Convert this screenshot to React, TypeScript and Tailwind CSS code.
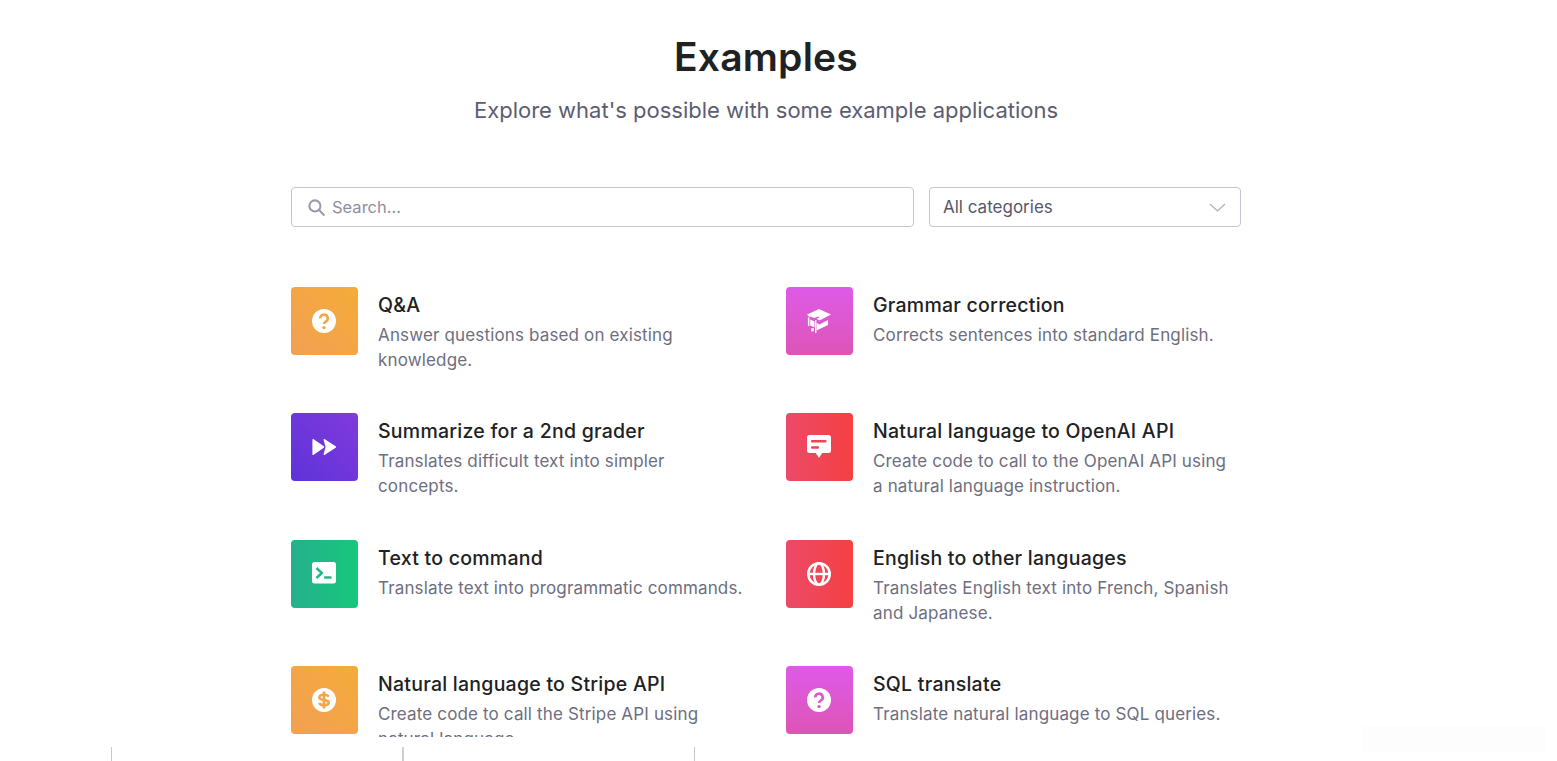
const font = "font-['Inter','Liberation_Sans',sans-serif]";

const orange = "bg-gradient-to-tr from-[#f2a052] to-[#f5ab38]";
const purple = "bg-gradient-to-tr from-[#5d33d9] to-[#8139dc]";
const pink = "bg-gradient-to-b from-[#de5ae8] to-[#dd54b5]";
const red = "bg-gradient-to-r from-[#ec4a68] to-[#f44040]";
const green = "bg-gradient-to-r from-[#25b08c] to-[#16c77c]";

function Question({ c }: { c: string }) {
  return (
    <svg width="24" height="24" viewBox="0 0 24 24">
      <circle cx="12" cy="12" r="12" fill="#fff" />
      <path d="M8.3 9.4a3.7 3.7 0 1 1 5.6 3.1c-1.2.8-1.9 1.2-1.9 2.6" fill="none" stroke={c} strokeWidth="2.6" />
      <circle cx="12" cy="18.6" r="1.7" fill={c} />
    </svg>
  );
}

function Forward() {
  return (
    <svg width="24" height="24" viewBox="0 0 24 24" fill="#fff" stroke="#fff" strokeWidth="1.6" strokeLinejoin="round">
      <path d="M1.2 4.8 11.4 12 1.2 19.2Z" />
      <path d="M12.4 4.8 23.2 12 12.4 19.2 14.4 12Z" />
    </svg>
  );
}

function Cap() {
  return (
    <svg width="24" height="24" viewBox="0 0 24 24" fill="#fff">
      <path d="M0 5.5 12 0 24 5.5 12.5 11.5 9.5 9.8 12.5 8.4 11.2 7.4 7 9 3.5 7.4 2.4 8Z" />
      <path d="M3.2 10.5 7.5 12.5 7.5 18.5 3.2 16.5Z" />
      <path d="M9.6 14 12.5 15.4 21 11 21 16 9.6 21.5Z" />
      <rect x="0.9" y="8.5" width="1.5" height="8.5" />
      <rect x="4.2" y="19.2" width="2.6" height="3.2" />
      <rect x="8" y="11" width="1.4" height="13" />
    </svg>
  );
}

function Chat({ c }: { c: string }) {
  return (
    <svg width="24" height="24" viewBox="0 0 24 24">
      <path d="M2.5 0h19A2.5 2.5 0 0 1 24 2.5v13A2.5 2.5 0 0 1 21.5 18h-6.3L12 23l-3.2-5H2.5A2.5 2.5 0 0 1 0 15.5V2.5A2.5 2.5 0 0 1 2.5 0Z" fill="#fff" />
      <rect x="4" y="5" width="15.5" height="2.4" rx="1" fill={c} />
      <rect x="4" y="11.3" width="8" height="2.4" rx="1" fill={c} />
    </svg>
  );
}

function Terminal({ c }: { c: string }) {
  return (
    <svg width="24" height="24" viewBox="0 0 24 24">
      <rect x="0" y="0" width="24" height="21.5" rx="2.5" fill="#fff" />
      <path d="M4.5 6 9.8 11 4.5 16" fill="none" stroke={c} strokeWidth="2.5" />
      <rect x="12" y="14.2" width="7.7" height="2.5" rx="1" fill={c} />
    </svg>
  );
}

function Globe() {
  return (
    <svg width="24" height="24" viewBox="0 0 24 24" fill="none" stroke="#fff">
      <circle cx="12" cy="12" r="10.7" strokeWidth="2.6" />
      <ellipse cx="12" cy="12" rx="5" ry="10.7" strokeWidth="2.4" />
      <path d="M1.5 12H22.5" strokeWidth="2.4" />
    </svg>
  );
}

function Dollar({ c }: { c: string }) {
  return (
    <svg width="24" height="24" viewBox="0 0 24 24">
      <circle cx="12" cy="12" r="12" fill="#fff" />
      <path d="M16.6 8.8C16 7.4 14.4 6.8 12 6.8c-2.8 0-4.6 1-4.6 2.7 0 3.9 9.4 1.3 9.4 5.1 0 1.7-1.9 2.7-4.8 2.7-2.4 0-4.2-.8-4.8-2.3" fill="none" stroke={c} strokeWidth="2.6" />
      <rect x="10.6" y="3.4" width="2.8" height="17.2" rx="0.6" fill={c} />
    </svg>
  );
}

type Item = { title: string; desc: string; bg: string; icon: React.ReactNode };

const items: Item[] = [
  { title: "Q&A", desc: "Answer questions based on existing knowledge.", bg: orange, icon: <Question c="#f3a54a" /> },
  { title: "Grammar correction", desc: "Corrects sentences into standard English.", bg: pink, icon: <Cap /> },
  { title: "Summarize for a 2nd grader", desc: "Translates difficult text into simpler concepts.", bg: purple, icon: <Forward /> },
  { title: "Natural language to OpenAI API", desc: "Create code to call to the OpenAI API using a natural language instruction.", bg: red, icon: <Chat c="#f14350" /> },
  { title: "Text to command", desc: "Translate text into programmatic commands.", bg: green, icon: <Terminal c="#1cbc83" /> },
  { title: "English to other languages", desc: "Translates English text into French, Spanish and Japanese.", bg: red, icon: <Globe /> },
  { title: "Natural language to Stripe API", desc: "Create code to call the Stripe API using natural language.", bg: orange, icon: <Dollar c="#f3a54a" /> },
  { title: "SQL translate", desc: "Translate natural language to SQL queries.", bg: pink, icon: <Question c="#dd57cf" /> },
];

export default function App() {
  return (
    <div className={`${font} relative flex h-[761px] w-full flex-col overflow-hidden bg-white`}>
      <div className="flex min-h-0 flex-1 flex-col items-center overflow-hidden pr-[25px]">
        <h1 className="mt-[31px] text-[39px] leading-[52px] font-semibold tracking-[0.2px] text-[#202123]">Examples</h1>
        <p className="mt-[11px] text-[22px] leading-[32px] text-[#5c5d70]">Explore what's possible with some example applications</p>

        <div className="mt-[61px] flex w-[950px] gap-[15px]">
          <div className="flex h-[40px] flex-1 items-center gap-[6px] rounded-[4px] border border-[#c5c5d2] pl-[15px]">
            <svg width="19" height="19" viewBox="0 0 24 24" fill="none" stroke="#9a9aad" strokeWidth="2.6">
              <circle cx="10" cy="10" r="7" />
              <path d="M15.5 15.5 22 22" />
            </svg>
            <span className="text-[16.5px] text-[#8e8ea0]">Search...</span>
          </div>
          <div className="flex h-[40px] w-[312px] items-center justify-between rounded-[4px] border border-[#c5c5d2] pr-[14px] pl-[13px]">
            <span className="pt-[1px] text-[17px] text-[#565869]">All categories</span>
            <svg width="17" height="9" viewBox="0 0 17 9" fill="none" stroke="#acacbe" strokeWidth="1.1">
              <path d="M1 1 8.5 8 16 1" />
            </svg>
          </div>
        </div>

        <div className="mt-[60px] grid w-[950px] grid-cols-2 gap-x-[40px]">
          {items.map((it) => (
            <div key={it.title} className="flex h-[126.33px] gap-[20px]">
              <div className={`flex h-[68px] w-[67px] shrink-0 items-center justify-center rounded-[4px] pr-[1px] ${it.bg}`}>
                {it.icon}
              </div>
              <div className="min-w-0 flex-1 pr-[2px]">
                <div className="mt-[5px] text-[19.5px] leading-[26px] font-medium tracking-[0.25px] text-[#202123]">{it.title}</div>
                <div className="mt-[5px] text-[17px] leading-[25px] tracking-[0.15px] text-[#6e6e80]">{it.desc}</div>
              </div>
            </div>
          ))}
        </div>
      </div>

      <div className="flex h-[24px] shrink-0 items-end pl-[111px]">
        <div className="h-[14px] w-[1px] bg-[#c8c8c8]" />
        <div className="ml-[290px] h-[14px] w-[2px] bg-[#cfcfcf]" />
        <div className="ml-[290px] h-[14px] w-[1px] bg-[#c8c8c8]" />
      </div>

      <div className="absolute top-[726px] left-[1363px] h-[27px] w-[182px] bg-[#fdfdfd]" />
    </div>
  );
}
